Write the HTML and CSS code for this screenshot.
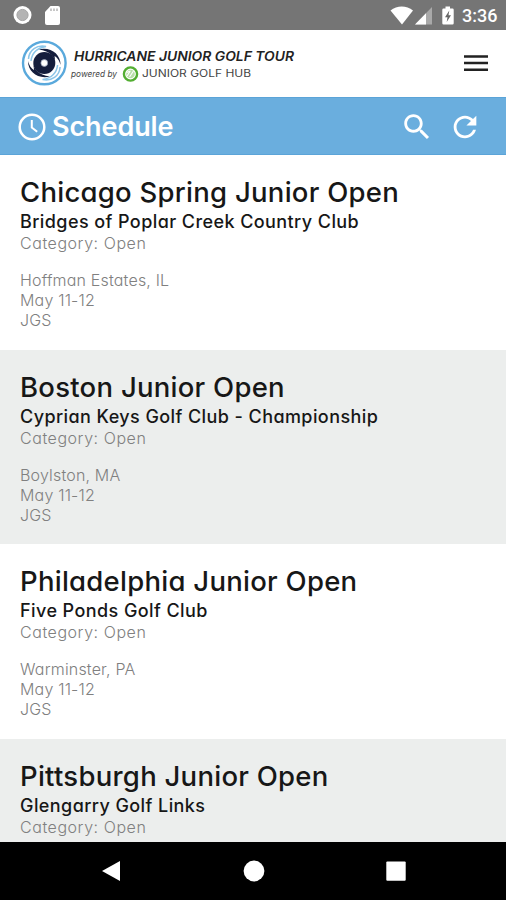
FILE: index.html
```html
<!DOCTYPE html>
<html lang="en">
<head>
<meta charset="utf-8">
<title>Schedule</title>
<link rel="stylesheet" href="styles.css">
</head>
<body>
<div class="app">
  <div class="status">
    <svg class="status-left" width="64" height="30" viewBox="0 0 64 30">
      <circle cx="22.500" cy="15" r="9" fill="#fff"/>
      <circle cx="22.500" cy="15" r="5.600" fill="#b4b4b4" stroke="#a6a6a6" stroke-width="1"/>
      <path d="M50.500 6H58a2 2 0 0 1 2 2v15a2 2 0 0 1-2 2H47a2 2 0 0 1-2-2V12z" fill="#fff"/>
      <path d="M51 8.500v2.500M54 8.500v2.500M57 8.500v2.500" stroke="#aaa" stroke-width="1.300"/>
    </svg>
    <svg class="status-icons" width="66" height="30" viewBox="390 0 66 30">
      <path d="M390.500 10.500C397 5.300 406.500 5.300 413 10.500L402 24.500z" fill="#fff"/>
      <path d="M432 7v17.500H415z" fill="#a9a9a9"/>
      <path d="M426 13.200V24.500H415z" fill="#fff"/>
      <path d="M445.500 6.500h4.500v2h2.500a1.200 1.200 0 0 1 1.200 1.200v13.600a1.200 1.200 0 0 1-1.200 1.200h-9a1.200 1.200 0 0 1-1.200-1.200V9.700a1.200 1.200 0 0 1 1.200-1.200h2z" fill="#fff"/>
      <path d="M449.300 10.500l-4.300 6.700h2.500l-.800 4.800 4.300-6.800h-2.500z" fill="#666"/>
    </svg>
    <span class="time">3:36</span>
  </div>
  <header class="brand">
    <svg class="logo" width="280" height="67" viewBox="20 30 280 67">
      <circle cx="44.300" cy="63" r="21.300" fill="#fff" stroke="#5aa9dc" stroke-width="2.400"/>
      <circle cx="44.300" cy="63" r="11" fill="#141d3c"/>
      <path d="M33.300 63C33.300 68 38 75 50 76.500C38 79.500 28 72 28 61C29.500 66 31 68 34 70z" fill="#141d3c"/>
      <path d="M55.300 63C55.300 58 50.600 51 38.600 49.500C50.600 46.500 60.600 54 60.600 65C59.100 60 57.600 58 54.600 56z" fill="#141d3c"/>
      <path d="M28.500 59C29 50 37 44.500 46 46.500C37 48 32 52 31 61M60.100 67C59.600 76 51.600 81.500 42.600 79.500C51.600 78 56.600 74 57.600 65" fill="none" stroke="#8bc5e8" stroke-width="1.500"/>
      <circle cx="44.300" cy="63" r="3.400" fill="#fff" stroke="#8f9bb3" stroke-width=".7"/>
      <text class="logo-main" x="74" y="61" textLength="220" lengthAdjust="spacingAndGlyphs">HURRICANE JUNIOR GOLF TOUR</text>
      <text class="logo-by" x="71" y="77" textLength="46" lengthAdjust="spacingAndGlyphs">powered by</text>
      <circle cx="130.500" cy="74" r="6.600" fill="#fff" stroke="#53ae32" stroke-width="2.400"/>
      <circle cx="130.500" cy="74" r="4.300" fill="#b9dfa9"/>
      <path d="M127 76l3-4.500M129.500 77l4-6M126.500 72.500l4-1.500" stroke="#fff" stroke-width="1.100"/>
      <text class="logo-hub" x="142" y="77.200" textLength="109" lengthAdjust="spacingAndGlyphs">JUNIOR GOLF HUB</text>
    </svg>
    <svg class="menu" width="26" height="20" viewBox="0 0 26 20"><path d="M1 2.500h24M1 9h24M1 15.800h24" stroke="#222" stroke-width="2.500"/></svg>
  </header>
  <div class="bar">
    <svg width="28" height="28" viewBox="0 0 28 28" fill="none" stroke="#fff" stroke-width="2.500"><circle cx="14" cy="14" r="12.300"/><path d="M13.800 7v7.500l5.400 4.200" stroke-width="2"/></svg>
    <h1>Schedule</h1>
    <svg class="search" width="34" height="34" viewBox="0 0 24 24"><path fill="#fff" d="M15.500 14h-.79l-.28-.27C15.410 12.590 16 11.110 16 9.500 16 5.910 13.090 3 9.500 3S3 5.910 3 9.500 5.910 16 9.500 16c1.610 0 3.090-.59 4.230-1.570l.27.28v.79l5 4.990L20.490 19l-4.990-5zm-6 0C7.010 14 5 11.990 5 9.500S7.010 5 9.500 5 14 7.010 14 9.500 11.990 14 9.500 14z"/></svg>
    <svg class="refresh" width="34" height="34" viewBox="0 0 24 24"><path fill="#fff" d="M17.650 6.350C16.200 4.900 14.210 4 12 4c-4.420 0-7.990 3.580-7.990 8s3.570 8 7.990 8c3.730 0 6.840-2.550 7.730-6h-2.080c-.82 2.330-3.040 4-5.650 4-3.310 0-6-2.690-6-6s2.690-6 6-6c1.660 0 3.140.69 4.220 1.780L13 11h7V4l-2.350 2.350z"/></svg>
  </div>
  <main class="list">
    <article class="event">
      <h2>Chicago Spring Junior Open</h2>
      <h3>Bridges of Poplar Creek Country Club</h3>
      <p class="category">Category: Open</p>
      <div class="details"><p>Hoffman Estates, IL</p><p>May 11-12</p><p>JGS</p></div>
    </article>
    <article class="event">
      <h2>Boston Junior Open</h2>
      <h3>Cyprian Keys Golf Club - Championship</h3>
      <p class="category">Category: Open</p>
      <div class="details"><p>Boylston, MA</p><p>May 11-12</p><p>JGS</p></div>
    </article>
    <article class="event">
      <h2>Philadelphia Junior Open</h2>
      <h3>Five Ponds Golf Club</h3>
      <p class="category">Category: Open</p>
      <div class="details"><p>Warminster, PA</p><p>May 11-12</p><p>JGS</p></div>
    </article>
    <article class="event">
      <h2>Pittsburgh Junior Open</h2>
      <h3>Glengarry Golf Links</h3>
      <p class="category">Category: Open</p>
    </article>
  </main>
  <nav class="nav">
    <svg width="22" height="22" viewBox="0 0 22 22"><path d="M2 11L20 1v20z" fill="#fff"/></svg>
    <svg width="22" height="22" viewBox="0 0 22 22"><circle cx="11" cy="11" r="10.400" fill="#fff"/></svg>
    <svg width="22" height="22" viewBox="0 0 22 22"><rect x="1.300" y="1.500" width="19.400" height="19.200" rx="1" fill="#fff"/></svg>
  </nav>
</div>
</body>
</html>
```
FILE: styles.css
```css
* { box-sizing: border-box; margin: 0; padding: 0; }
body { font-family: Inter, "Liberation Sans", sans-serif; font-feature-settings: "cv11" 1; background: #fff; }
svg { display: block; flex: none; }
.app { width: 506px; height: 900px; display: flex; flex-direction: column; overflow: hidden; }
.status { flex: none; height: 30px; background: #757575; display: flex; align-items: center; }
.status-icons { margin-left: auto; }
.time { width: 50px; padding-left: 6px; font: 500 18px/31px Roboto, sans-serif; color: #fff; white-space: nowrap; }
.brand { flex: none; height: 67px; display: flex; align-items: center; justify-content: space-between; padding: 0 17px 0 20px; }
.logo-main { font: italic 600 13px Inter, sans-serif; fill: #222; }
.logo-by { font: italic 400 9px Inter, sans-serif; fill: #444; }
.logo-hub { font: 400 10px Inter, sans-serif; fill: #444; }
.bar { flex: none; height: 58px; background: #6aaede; border-top: 1px solid #5ba4d8; border-bottom: 1px solid #5ba4d8; display: flex; align-items: center; padding: 1px 24px 0 18px; }
.bar h1 { margin-left: 6px; font-size: 27px; line-height: 55px; font-weight: 600; color: #fff; letter-spacing: -0.100px; }
.search { margin-left: auto; }
.refresh { margin-left: 14px; }
.list { flex: 1; min-height: 0; overflow: hidden; }
.event { height: 194.500px; padding: 20px 20px 0; background: #fff; white-space: nowrap; }
.event:nth-child(even) { background: #eceeed; }
.event h2 { font-size: 27.500px; line-height: 34px; font-weight: 500; color: #171717; letter-spacing: 0.260px; }
.event h3 { font-size: 18px; line-height: 25px; font-weight: 500; color: #171717; letter-spacing: 0.420px; }
.event p { font-size: 16px; line-height: 20px; font-weight: 300; color: #808080; letter-spacing: 0.180px; }
.event .category { line-height: 18px; letter-spacing: 0.550px; }
.details { margin-top: 18px; }
.nav { flex: none; height: 58px; background: #000; display: flex; align-items: center; justify-content: space-between; padding: 0 99px 0 100px; }
```
